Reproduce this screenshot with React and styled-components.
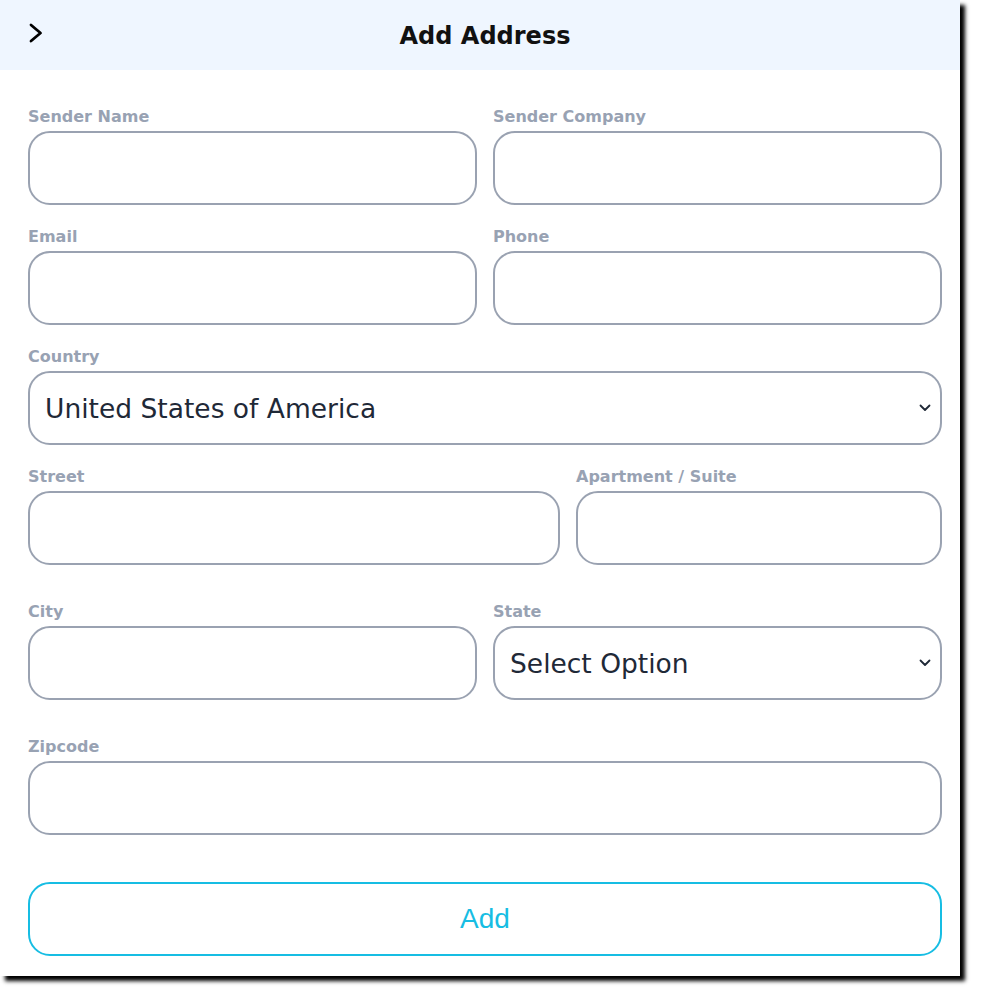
import React from "react";
import styled, { createGlobalStyle } from "styled-components";

const Global = createGlobalStyle`
  html, body { margin: 0; padding: 0; background: #ffffff; }
  body { font-family: "DejaVu Sans", sans-serif; min-height: 100vh; }
  #root { min-height: 100vh; }
  * { box-sizing: border-box; }
`;

const Page = styled.div`
  min-height: 1006px;
`;

const Panel = styled.div`
  width: 960px;
  height: 976px;
  background: #ffffff;
  box-shadow: 5px 5px 4px #000;
  display: flex;
  flex-direction: column;
`;

const Header = styled.div`
  height: 70px;
  background: #eff6ff;
  display: grid;
  grid-template-columns: 1fr auto 1fr;
  align-items: center;
  padding: 0 18px 0 28px;
`;

const BackButton = styled.button`
  justify-self: start;
  background: none;
  border: none;
  padding: 0;
  margin-top: -4px;
  display: flex;
  cursor: pointer;
`;

const Title = styled.h1`
  margin: 0;
  font-family: "DejaVu Sans", sans-serif;
  font-size: 24px;
  font-weight: 700;
  color: #111111;
  margin-top: 2px;
`;

const Form = styled.form`
  display: flex;
  flex-direction: column;
  padding: 37px 18px 0 28px;
`;

const Row = styled.div`
  display: grid;
  grid-template-columns: ${(p) => p.$cols || "1fr 1fr"};
  column-gap: 16px;
  margin-bottom: ${(p) => p.$gap ?? 22}px;
`;

const Field = styled.label`
  display: flex;
  flex-direction: column;
  gap: 4px;
`;

const LabelText = styled.span`
  font-family: "DejaVu Sans", sans-serif;
  font-size: 16px;
  line-height: 20px;
  font-weight: 700;
  color: #98a2b3;
  white-space: nowrap;
`;

const Input = styled.input`
  height: 74px;
  width: 100%;
  border: 2px solid #9aa2b1;
  border-radius: 22px;
  background: #fff;
  padding: 0 15px;
  font-family: "DejaVu Sans", sans-serif;
  font-size: 24px;
  outline: none;
`;

const SelectWrap = styled.div`
  position: relative;
`;

const Select = styled.select`
  appearance: none;
  -webkit-appearance: none;
  height: 74px;
  width: 100%;
  border: 2px solid #9aa2b1;
  border-radius: 22px;
  background: #fff;
  padding: 0 15px;
  font-family: "DejaVu Sans", sans-serif;
  font-size: 26.5px;
  font-weight: 400;
  color: #1f2937;
  outline: none;
`;

const Arrow = styled.svg`
  position: absolute;
  right: 11px;
  top: 50%;
  transform: translateY(-50%);
  pointer-events: none;
`;

const AddButton = styled.button`
  height: 74px;
  width: 100%;
  border: 2px solid #17bde3;
  border-radius: 22px;
  background: #fff;
  color: #17bde3;
  font-family: "Liberation Sans", Arial, sans-serif;
  font-size: 28px;
  cursor: pointer;
  margin-top: 47px;
`;

const ChevronDown = () => (
  <Arrow width="12" height="8" viewBox="0 0 12 8">
    <polyline
      points="1.5,1.5 6,6 10.5,1.5"
      fill="none"
      stroke="#1f2937"
      strokeWidth="1.8"
      strokeLinecap="round"
      strokeLinejoin="round"
    />
  </Arrow>
);

const TextField = ({ label }) => (
  <Field>
    <LabelText>{label}</LabelText>
    <Input type="text" />
  </Field>
);

const SelectField = ({ label, value, options }) => (
  <Field>
    <LabelText>{label}</LabelText>
    <SelectWrap>
      <Select defaultValue={value}>
        {options.map((o) => (
          <option key={o}>{o}</option>
        ))}
      </Select>
      <ChevronDown />
    </SelectWrap>
  </Field>
);

export default function App() {
  return (
    <Page>
      <Global />
      <Panel>
        <Header>
          <BackButton type="button" aria-label="Back">
            <svg width="16" height="22" viewBox="0 0 16 22">
              <polyline
                points="3,3 12.5,11 3,19"
                fill="none"
                stroke="#000"
                strokeWidth="2.8"
                strokeLinecap="round"
                strokeLinejoin="round"
              />
            </svg>
          </BackButton>
          <Title>Add Address</Title>
          <span />
        </Header>
        <Form onSubmit={(e) => e.preventDefault()}>
          <Row>
            <TextField label="Sender Name" />
            <TextField label="Sender Company" />
          </Row>
          <Row>
            <TextField label="Email" />
            <TextField label="Phone" />
          </Row>
          <Row $cols="1fr">
            <SelectField
              label="Country"
              value="United States of America"
              options={["United States of America", "Canada", "Mexico"]}
            />
          </Row>
          <Row $cols="532px 1fr" $gap={37}>
            <TextField label="Street" />
            <TextField label="Apartment / Suite" />
          </Row>
          <Row $gap={37}>
            <TextField label="City" />
            <SelectField
              label="State"
              value="Select Option"
              options={["Select Option", "Alabama", "Alaska", "Arizona"]}
            />
          </Row>
          <Row $cols="1fr" $gap={0}>
            <TextField label="Zipcode" />
          </Row>
          <AddButton type="submit">Add</AddButton>
        </Form>
      </Panel>
    </Page>
  );
}
